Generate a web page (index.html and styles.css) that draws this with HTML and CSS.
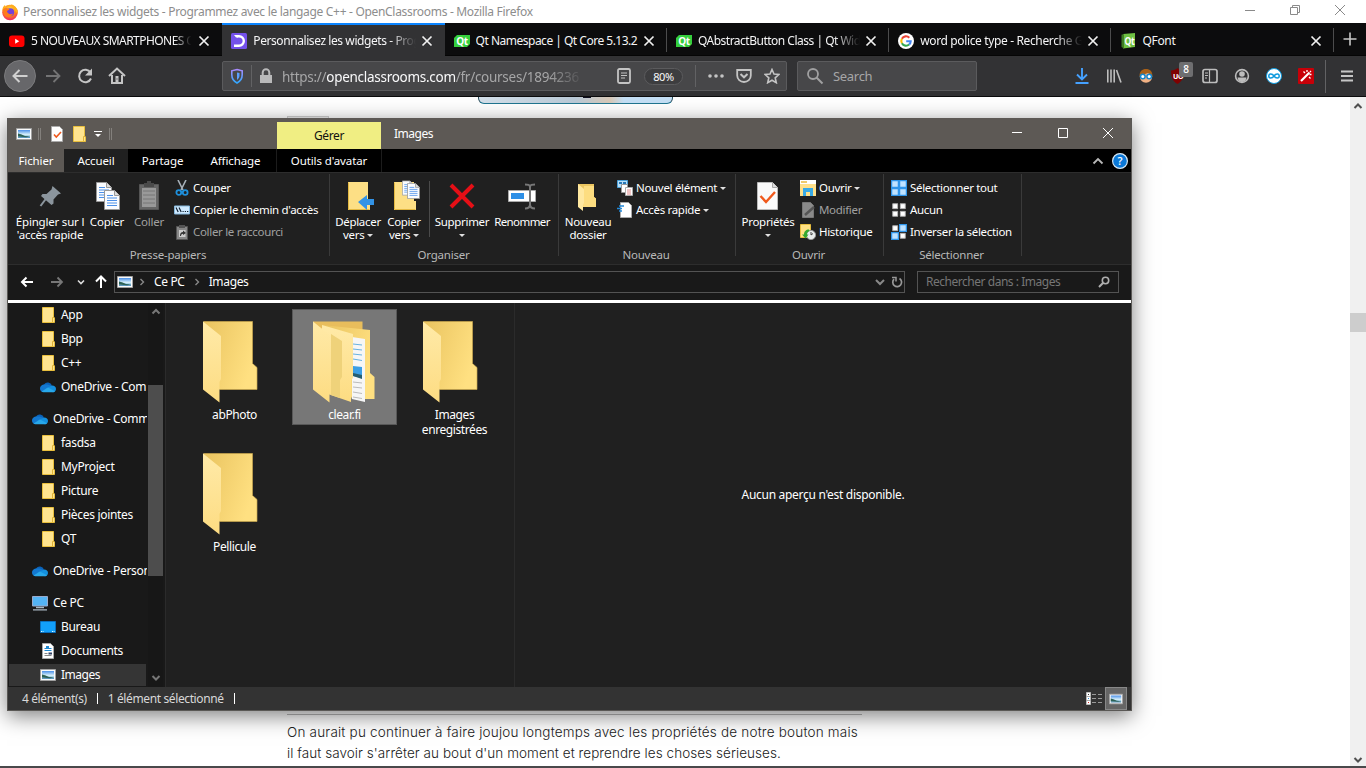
FILE: index.html
```html
<!DOCTYPE html>
<html lang="fr">
<head>
<meta charset="utf-8">
<title>Personnalisez les widgets</title>
<link rel="stylesheet" href="styles.css">
</head>
<body>
<svg class="defs" width="0" height="0">
  <defs>
    <linearGradient id="gFlap" x1="0" y1="0" x2="0" y2="1"><stop offset="0" stop-color="#ffeaa8"/><stop offset="1" stop-color="#fddc82"/></linearGradient>
    <linearGradient id="gBack" x1="0" y1="0" x2="1" y2="0.4"><stop offset="0" stop-color="#e9c35f"/><stop offset="1" stop-color="#ffe081"/></linearGradient>
    <linearGradient id="gSky" x1="0" y1="0" x2="0" y2="1"><stop offset="0" stop-color="#4a8fe8"/><stop offset=".55" stop-color="#d8f0fa"/><stop offset=".7" stop-color="#a8d4ea"/><stop offset="1" stop-color="#4a88b4"/></linearGradient>
    <linearGradient id="gShield" x1="0" y1="0" x2="0" y2="1"><stop offset="0" stop-color="#a98bff"/><stop offset="1" stop-color="#2fa8ff"/></linearGradient>
    <radialGradient id="gFox" cx=".5" cy=".3" r=".7"><stop offset="0" stop-color="#ffde3a"/><stop offset=".55" stop-color="#ff8a16"/><stop offset="1" stop-color="#f0246a"/></radialGradient>
    <symbol id="close" viewBox="0 0 16 16"><path d="M3.500 3.500l9 9m0-9l-9 9" stroke="currentColor" stroke-width="1.700" fill="none"/></symbol>
    <symbol id="qt" viewBox="0 0 16 16"><path d="M3 2h13v9l-3 3H0V5z" fill="#35cf3d"/><text x="8" y="11.500" text-anchor="middle" font-family="Open Sans" font-weight="700" font-size="10" fill="#fff">Qt</text></symbol>
    <symbol id="pic" viewBox="0 0 16 16"><path d="M.5 2.500h15v11H.5z" fill="#fafafa" stroke="#a0a0a0"/><path d="M2 4h12v8H2z" fill="url(#gSky)"/><path d="M2 7.500l3 .8 4 1.700 5 .5-4 .7-8-.7z" fill="#2d6256"/></symbol>
    <symbol id="fold" viewBox="0 0 16 16"><path d="M2.500.5h11v10l1 .5v4.500h-12z" fill="#ffe48f" stroke="#e9bf3d"/><path d="M12.500 15v-4.500h2" fill="none" stroke="#e0b437"/></symbol>
    <symbol id="cloud" viewBox="0 0 16 16"><path d="M4 5.500a4.500 4.500 0 0 1 8 1L7 10z" fill="#0a62b9"/><path d="M3.500 5.500C1.500 6 0 7.500 0 9.500c0 1.800 1 3 2.500 3.500L12 7 7.500 5.500z" fill="#1378d0"/><path d="M12 6.500c2.500 0 4 1.500 4 3.500s-1.300 3.200-3 3.200L5 10z" fill="#1490df"/><path d="M1.500 12.500L8 8.500l7 3.800c-.6.600-1.200.9-2 .9H3.500c-.8 0-1.500-.3-2-.7z" fill="#28a8ea"/></symbol>
    <symbol id="bigfold" viewBox="0 0 56 84"><path d="M1 1.500h49.500v42l4.500 4V69.500H12z" fill="url(#gBack)"/><path d="M2 1.500h48.500v42l4.500 4V69.500H18" fill="none" stroke="#c9a64e" stroke-width=".7"/><path d="M1 1.500l18 14.500v43l-1.500 3v20.500L1 69.500z" fill="url(#gFlap)"/></symbol>
    <symbol id="pagel" viewBox="0 0 16 20"><path d="M.5.5h10l5 5v14H.5z" fill="#fafcff" stroke="#999"/><path d="M10.500.5v5h5" fill="#ddd" stroke="#999"/><path d="M3 5.500h6M3 8h10M3 10.500h10M3 13h10M3 15.500h10" stroke="#4b90e8"/></symbol>
    <symbol id="cell" viewBox="0 0 7 7"><path d="M.75.75h5.500v5.500H.75z" fill="#fff" stroke="#aaa" stroke-width="1"/></symbol>
    <symbol id="cellb" viewBox="0 0 8 8"><path d="M.6.6h6.800v6.800H.6z" fill="#bfe2ff" stroke="#2f95ea" stroke-width="1.300"/></symbol>
  </defs>
</svg>

<div class="browser">
  <header class="titlebar">
    <svg class="i18" viewBox="0 0 18 18"><circle cx="9" cy="9.500" r="7.800" fill="url(#gFox)"/><path d="M1.500 8C1 5 2.500 3 4 2l.8 2.500zM10 1c4 1.500 7.500 5 6.500 10L13 6z" fill="#ffb01c"/><circle cx="9.200" cy="9.300" r="4" fill="#7541d9"/><path d="M2 6c3-2 5-1 6.500.5L6 8c0 3 4 4 6 2.500-1 4-7 5-9 1z" fill="#ff7a1c"/></svg>
    <span class="titletext">Personnalisez les widgets - Programmez avec le langage C++ - OpenClassrooms - Mozilla Firefox</span>
    <div class="wctl light">
      <svg viewBox="0 0 12 12"><path d="M1 6.500h10"/></svg>
      <svg viewBox="0 0 12 12"><path d="M1.500 3.500h7v7h-7zM3.500 3.500v-2h7v7h-2"/></svg>
      <svg viewBox="0 0 12 12"><path d="M1 1l10 10M11 1L1 11"/></svg>
    </div>
  </header>

  <nav class="tabs">
    <div class="tab nosep"><svg class="i16" viewBox="0 0 16 16"><rect y="2.500" width="15.500" height="11.500" rx="3" fill="#f00"/><path d="M6.200 5.700l4 2.500-4 2.600z" fill="#fff"/></svg><span class="tt a">5 NOUVEAUX SMARTPHONES Q</span><svg class="x"><use href="#close"/></svg></div>
    <div class="tab active nosep"><svg class="i16" viewBox="0 0 16 16"><rect width="16" height="16" rx="1.500" fill="#7451eb"/><path d="M6 3.200h2a4.800 4.800 0 0 1 0 9.600H3" fill="none" stroke="#fff" stroke-width="2.400"/><path d="M3 2h4v2.500H5z" fill="#fff"/></svg><span class="tt b">Personnalisez les widgets - Prog</span><svg class="x"><use href="#close"/></svg></div>
    <div class="tab"><svg class="i16"><use href="#qt"/></svg><span class="tt c">Qt Namespace | Qt Core 5.13.2</span><svg class="x"><use href="#close"/></svg></div>
    <div class="tab"><svg class="i16"><use href="#qt"/></svg><span class="tt d">QAbstractButton Class | Qt Wid</span><svg class="x"><use href="#close"/></svg></div>
    <div class="tab"><svg class="i16" viewBox="0 0 16 16"><circle cx="8" cy="8" r="8" fill="#fff"/><g fill="none" stroke-width="2.100"><path d="M11.300 4.700A4.700 4.700 0 0 0 3.900 5.700" stroke="#ea4335"/><path d="M3.900 5.700a4.700 4.700 0 0 0 0 4.600" stroke="#fbbc05"/><path d="M3.900 10.300a4.700 4.700 0 0 0 7.200 1.200" stroke="#34a853"/><path d="M11.100 11.500A4.500 4.500 0 0 0 12.700 8.200H8.200" stroke="#4285f4"/></g></svg><span class="tt e">word police type - Recherche G</span><svg class="x"><use href="#close"/></svg></div>
    <div class="tab"><svg class="i16" viewBox="0 0 16 16"><path d="M3 1l12-1v14L3 15.500z" fill="#6fc043"/><path d="M1.500 1.800L4 1v14.500L1.500 14z" fill="#3f7d25"/><text x="9.500" y="11.500" text-anchor="middle" font-family="Open Sans" font-weight="700" font-size="10" textLength="10" lengthAdjust="spacingAndGlyphs" fill="#fff">Qt</text></svg><span class="tt f">QFont</span><svg class="x"><use href="#close"/></svg></div>
    <svg class="plus" viewBox="0 0 16 16"><path d="M8 1.500v13M1.500 8h13" stroke="#c8c8c8" stroke-width="1.600"/></svg>
  </nav>

  <div class="toolbar">
    <span class="back"><svg class="i18" viewBox="0 0 18 18"><path d="M16.500 9H3m5.500-6L2.500 9l6 6" fill="none" stroke="#d0d0d0" stroke-width="2"/></svg></span>
    <svg class="i18 fwd" viewBox="0 0 18 18"><path d="M2 9h13M9.500 3l6 6-6 6" fill="none" stroke="#747475" stroke-width="1.800"/></svg>
    <svg class="i18 rel" viewBox="0 0 18 18"><path d="M14.500 5.500a6.200 6.200 0 1 0 .5 6" fill="none" stroke="#c5c5c5" stroke-width="2"/><path d="M16 1.500v7h-7z" fill="#c5c5c5"/></svg>
    <svg class="i18 home" viewBox="0 0 18 18"><path d="M1 9l8-7.500L17 9M4 8v8h10V8" fill="none" stroke="#c5c5c5" stroke-width="2"/><path d="M7.500 9h3v7h-3z" fill="#c5c5c5"/><path d="M8.500 11.500h1v1h-1z" fill="#333"/></svg>
    <div class="url">
      <svg class="i16 shield" viewBox="0 0 16 16"><path d="M8 1.500l5.200 1.300v4C13.200 11 11 13.500 8 15c-3-1.500-5.200-4-5.200-8.200v-4z" fill="none" stroke="url(#gShield)" stroke-width="1.600"/><path d="M8 4.500l2.500.6v2.500c0 2-1 3.300-2.500 4.300z" fill="#5aa0ff"/></svg>
      <i class="vs"></i>
      <svg class="i16 lock" viewBox="0 0 16 16"><path d="M2 7h12v8H2z" fill="#b9b9ba"/><path d="M4.700 7V4.500a3.300 3.300 0 0 1 6.600 0V7" fill="none" stroke="#b9b9ba" stroke-width="2"/></svg>
      <span class="addr">https://<b>openclassrooms.com</b>/fr/courses/1894236</span>
      <svg class="i16 reader" viewBox="0 0 16 16"><rect x="2" y="1" width="12" height="14" rx="1.500" fill="none" stroke="#c4c4c4" stroke-width="1.800"/><path d="M5 5h6M5 7.500h6M5 10h4" stroke="#c4c4c4"/></svg>
      <span class="zoom">80%</span>
      <i class="vs tall"></i>
      <svg class="i16 dots" viewBox="0 0 16 16"><g fill="#c4c4c4"><circle cx="2" cy="8" r="1.800"/><circle cx="8" cy="8" r="1.800"/><circle cx="14" cy="8" r="1.800"/></g></svg>
      <svg class="i16 pocket" viewBox="0 0 16 16"><path d="M1.200 2h13.600v5.500a6.800 6.500 0 0 1-13.600 0z" fill="none" stroke="#c4c4c4" stroke-width="1.800"/><path d="M4.500 6L8 9.300 11.500 6" fill="none" stroke="#c4c4c4" stroke-width="2"/></svg>
      <svg class="i16 star" viewBox="0 0 16 16"><path d="M8 1.500l2 4.500 4.900.5-3.700 3.300 1.100 4.900L8 12.200l-4.300 2.500 1.100-4.900L1.100 6.500 6 6z" fill="none" stroke="#c4c4c4" stroke-width="1.600"/></svg>
    </div>
    <div class="search"><svg class="i18" viewBox="0 0 18 18"><circle cx="7" cy="7" r="5" fill="none" stroke="#a0a0a1" stroke-width="1.800"/><path d="M10.500 10.500l6 6" stroke="#a0a0a1" stroke-width="2"/></svg><span>Search</span></div>
    <div class="exts">
      <svg class="i16" viewBox="0 0 16 16"><path d="M8 0v11M3 6.500l5 5 5-5M1.500 15h13" fill="none" stroke="#45a1ff" stroke-width="1.900"/></svg>
      <svg class="i16" viewBox="0 0 16 16"><path d="M1.800 1.500v13M5 1.500v13M8.200 1.500v13M10.500 2l4.500 12.500" fill="none" stroke="#bdbdbd" stroke-width="1.600"/></svg>
      <svg class="i16" viewBox="0 0 16 16"><circle cx="8" cy="8.500" r="6.200" fill="#f2b184"/><path d="M1.500 8C1.500 3.500 4 1 8 1s6.500 2.500 6.500 7L10 5z" fill="#a86018"/><circle cx="4.800" cy="8.500" r="2.300" fill="#fff" stroke="#1688cf" stroke-width="1.500"/><circle cx="11.200" cy="8.500" r="2.300" fill="#fff" stroke="#1688cf" stroke-width="1.500"/></svg>
      <span class="ub"><svg class="i16" viewBox="0 0 16 16"><path d="M1 2.500c3 0 5-1 6.500-2.500C9 1.500 12 2.500 14 2.500c0 7-2 11-6.500 13.500C3 13.500 1 9.500 1 2.500z" fill="#800000"/><text x="3" y="10.500" font-family="Open Sans" font-weight="700" font-size="7" fill="#fff">UO</text></svg><em>8</em></span>
      <svg class="i16" viewBox="0 0 16 16"><rect x="1" y="1.500" width="14" height="13" rx="2" fill="none" stroke="#bdbdbd" stroke-width="1.700"/><path d="M7.500 2v12M3 5h3M3 7.500h3M3 10h2" stroke="#bdbdbd" stroke-width="1.200"/></svg>
      <svg class="i16" viewBox="0 0 16 16"><circle cx="8" cy="8" r="6.400" fill="none" stroke="#bdbdbd" stroke-width="1.600"/><circle cx="8" cy="6" r="2.800" fill="#bdbdbd"/><path d="M3.500 9.500h9c-.5 3-2 4.500-4.500 4.500s-4-1.500-4.500-4.500z" fill="#bdbdbd"/></svg>
      <svg class="i16" viewBox="0 0 16 16"><circle cx="8" cy="8" r="7.500" fill="#fff" stroke="#0d9ade"/><path d="M8 8C6 5 2.800 5.500 2.800 8S6 11 8 8s5.200-2.500 5.200 0S10 11 8 8z" fill="none" stroke="#0d9ade" stroke-width="1.500"/></svg>
      <svg class="i16" viewBox="0 0 16 16"><rect width="16" height="16" rx="1" fill="#c80008"/><path d="M3 13l8.500-8.500" stroke="#fff" stroke-width="2.200"/><path d="M9 2v2M13.500 6.500h-2M5.500 3.500l1.500 1.500M12.500 10.500L11 9M13 3l-1 1" stroke="#fff" stroke-width="1.300"/></svg>
    </div>
    <i class="vs end"></i>
    <svg class="i16 menu" viewBox="0 0 16 16"><path d="M2 3.500h12M2 8h12M2 12.500h12" stroke="#c5c5c5" stroke-width="1.800"/></svg>
  </div>

  <main class="page">
    <article class="article">
      <div class="shot"><i></i></div>
      <div class="chip"></div>
      <hr>
      <p>On aurait pu continuer à faire joujou longtemps avec les propriétés de notre bouton mais</p>
      <p class="l2">il faut savoir s'arrêter au bout d'un moment et reprendre les choses sérieuses.</p>
    </article>
    <aside class="sb">
      <svg viewBox="0 0 16 16"><path d="M4.500 11L8 7.500l3.500 3.500" fill="none" stroke="#505050" stroke-width="2"/></svg>
      <i></i>
      <svg class="dn" viewBox="0 0 16 16"><path d="M4.500 7L8 10.500 11.500 7" fill="none" stroke="#505050" stroke-width="2"/></svg>
    </aside>
  </main>
</div>

<section class="win">
  <div class="wt">
    <svg class="i16 q1"><use href="#pic"/></svg><i class="grip"></i>
    <svg class="i16 q2" viewBox="0 0 16 16"><path d="M2.500.5h8l3 3v12h-11z" fill="#fff" stroke="#aaa"/><path d="M5 8.500l2.300 2.500L12 6" fill="none" stroke="#f05a1e" stroke-width="1.600"/></svg>
    <svg class="i16 q3"><use href="#fold"/></svg>
    <svg class="q4" viewBox="0 0 8 8"><path d="M0 1.500h8" stroke="#fff"/><path d="M1 4h6L4 7z" fill="#fff"/></svg><i class="grip g2"></i>
    <span class="ctx">Gérer</span>
    <span class="wname">Images</span>
    <div class="wctl dark">
      <svg viewBox="0 0 12 12"><path d="M1 5.500h10"/></svg>
      <svg viewBox="0 0 12 12"><path d="M1.500 1.500h9v9h-9z"/></svg>
      <svg viewBox="0 0 12 12"><path d="M1 1l10 10M11 1L1 11"/></svg>
    </div>
  </div>
  <div class="wtabs">
    <span class="file">Fichier</span><span class="cur">Accueil</span><span class="t3">Partage</span><span class="t4">Affichage</span><span class="t5">Outils d'avatar</span>
    <svg class="coll" viewBox="0 0 12 12"><path d="M1.500 8.500L6 4l4.500 4.500" fill="none" stroke="#b8b8b8" stroke-width="1.800"/></svg>
    <svg class="i16 help" viewBox="0 0 16 16"><circle cx="8" cy="8" r="7.400" fill="#0b78d7" stroke="#d8e8f4" stroke-width="1.200"/><text x="8" y="12" text-anchor="middle" font-family="Open Sans" font-size="11" font-weight="600" fill="#fff">?</text></svg>
  </div>

  <div class="ribbon">
    <div class="grp g-clip"><div class="tools">
      <button class="big w72"><svg class="pin" viewBox="0 0 32 32"><path d="M20.500 6L29 13.500l-3 1-4.500 5 0 4-2 1.500L9 16l1.500-2 4 0 5-4.500z" fill="#8b959d"/><path d="M14.500 18L8.500 26" stroke="#8b959d" stroke-width="2"/></svg><span>Épingler sur l<br>'accès rapide</span></button>
      <button class="big w42"><svg viewBox="0 0 32 32"><use href="#pagel" x="5" y="2" width="16" height="20"/><use href="#pagel" x="13" y="10" width="16" height="20"/></svg><span>Copier</span></button>
      <button class="big w42 off"><svg viewBox="0 0 32 32"><path d="M6.500 4.500h19v25h-19z" fill="#666" stroke="#555"/><path d="M9 8h14v19H9z" fill="#999"/><path d="M10 11h12M10 15h12M10 19h12M10 23h12" stroke="#777"/><path d="M11 3h10v4H11zM14 1h4v3h-4z" fill="#4a4a4a"/></svg><span>Coller</span></button>
      <ul class="small">
        <li><svg viewBox="0 0 16 16"><path d="M4 0l5 10M12 0L7 10" stroke="#a6b0b8" stroke-width="1.600"/><circle cx="4.800" cy="12.500" r="2.400" fill="none" stroke="#1e90dc" stroke-width="1.800"/><circle cx="11.200" cy="12.500" r="2.400" fill="none" stroke="#1e90dc" stroke-width="1.800"/></svg><span>Couper</span></li>
        <li><svg viewBox="0 0 16 16"><path d="M.5 4h15v8H.5z" fill="#cfeaff" stroke="#86b8dc"/><path d="M2 5.500L4.200 10M5 5.500L7.200 10M8.500 9.500h1.200M10.800 9.500H12M13 9.500h1.300" stroke="#123" stroke-width="1.200"/></svg><span>Copier le chemin d'accès</span></li>
        <li class="off"><svg viewBox="0 0 16 16"><path d="M2.500 2.500h11v13h-11z" fill="#888" stroke="#555"/><path d="M5 1h6v3H5z" fill="#555"/><path d="M5 6h6.500v7H5z" fill="#ccc"/><path d="M6 12c0-3 1-4 3-4V6.500L12 9 9 11V9.800c-1.200 0-1.800.8-2 2.200z" fill="#333"/></svg><span>Coller le raccourci</span></li>
      </ul></div><h6>Presse-papiers</h6></div>
    <div class="grp g-org"><div class="tools">
      <button class="big w46"><svg viewBox="0 0 32 32"><path d="M5 2h20v19h2v9H5z" fill="#fddf85"/><path d="M5.500 2.500v27h21" fill="none" stroke="#e4b942"/><path d="M31 19v6h-7v5l-9-8 9-7v4z" fill="#3293e6"/></svg><span>Déplacer<br>vers <i class="car"></i></span></button>
      <button class="big w46"><svg viewBox="0 0 32 32"><path d="M5 2h20v19h2v9H5z" fill="#fddf85"/><path d="M5.500 2.500v27h21" fill="none" stroke="#e4b942"/><use href="#pagel" x="13" y="0" width="12" height="16"/><use href="#pagel" x="18" y="3" width="13" height="16"/></svg><span>Copier<br>vers <i class="car"></i></span></button>
      <i class="tsep"></i>
      <button class="big w60"><svg viewBox="0 0 32 32"><path d="M5 5l22 22M27 5L5 27" stroke="#e60f16" stroke-width="4"/></svg><span>Supprimer<br><i class="car"></i></span></button>
      <button class="big w60 ren"><svg viewBox="0 0 32 32"><path d="M2.500 10.500h27v11h-27z" fill="#fff" stroke="#aaa"/><path d="M5 13h13v6H5z" fill="#2d8fe6"/><path d="M19 4.500c3 0 5 0 5 3v17c0 3-2 4-5 4M29 4.500c-3 0-5 0-5 3v17c0 3 2 4 5 4" fill="none" stroke="#777" stroke-width="2"/></svg><span>Renommer</span></button>
      </div><h6>Organiser</h6></div>
    <div class="grp g-new"><div class="tools">
      <button class="big w54"><svg viewBox="0 0 32 32"><path d="M7 4h16v13l2 1.500V27H7z" fill="#ecc661"/><path d="M13 6h10v11l2 1.500V27H12z" fill="#fddd80"/><path d="M7 4l6 5v14l-1 2v6l-5-4z" fill="#ffe8a0"/></svg><span>Nouveau<br>dossier</span></button>
      <ul class="small">
        <li><svg viewBox="0 0 16 16"><path d="M.5.5h10v7H.5z" fill="#b9e0f8" stroke="#4aa0d8"/><path d="M2 2h3v2H2zM6 2h3v2H6z" fill="#2878b8"/><path d="M4.500 4.500h6v8h-6z" fill="#fff" stroke="#999"/><path d="M8.500 7.500h7v8h-7z" fill="#fff" stroke="#aaa"/><path d="M10 10h4M10 12h4M10 14h4" stroke="#e28a8a"/></svg><span>Nouvel élément <i class="car"></i></span></li>
        <li><svg viewBox="0 0 16 16"><path d="M3.500.5h8l3 3v12h-11z" fill="#fff" stroke="#aaa"/><path d="M2 4h5M0 6.500h5M2 9h3" stroke="#2188d8" stroke-width="1.300"/></svg><span>Accès rapide <i class="car"></i></span></li>
      </ul></div><h6>Nouveau</h6></div>
    <div class="grp g-open"><div class="tools">
      <button class="big w60"><svg viewBox="0 0 32 32"><path d="M5.500 2.500h15l5 5v22h-20z" fill="#fafafa" stroke="#bbb"/><path d="M20.500 2.500v5h5" fill="#ddd" stroke="#aaa"/><path d="M8.500 16l5.500 6 9-10" fill="none" stroke="#f0591c" stroke-width="2.400"/></svg><span>Propriétés<br><i class="car"></i></span></button>
      <ul class="small">
        <li><svg viewBox="0 0 16 16"><path d="M0 0h16v16H0z" fill="#ffe08a"/><path d="M0 0h16v4H0z" fill="#fff"/><path d="M1 2h6" stroke="#e8b83a" stroke-width="1.500"/><path d="M3 16V8h10v8h-3v-4H6v4z" fill="#39a9e4"/></svg><span>Ouvrir <i class="car"></i></span></li>
        <li class="off"><svg viewBox="0 0 16 16"><path d="M2.500.5h8l3 3v12h-11z" fill="#8a8a8a" stroke="#777"/><path d="M5 13l9-8" stroke="#555" stroke-width="2.500"/></svg><span>Modifier</span></li>
        <li><svg viewBox="0 0 16 16"><path d="M.5.5h10v13H.5z" fill="#ffe184" stroke="#e6bd3f"/><circle cx="11" cy="11" r="4.600" fill="#e8ecec" stroke="#999"/><path d="M11 8v3l2-1.500" fill="none" stroke="#444"/><path d="M9 5.500c-3 0-5 2-5 5H2l3.500 4 3-4H7c0-2 1-3 2.500-3.500z" fill="#35a82e"/></svg><span>Historique</span></li>
      </ul></div><h6>Ouvrir</h6></div>
    <div class="grp g-sel"><div class="tools">
      <ul class="small">
        <li><svg viewBox="0 0 16 16"><use href="#cellb" width="8" height="8"/><use href="#cellb" x="8" width="8" height="8"/><use href="#cellb" y="8" width="8" height="8"/><use href="#cellb" x="8" y="8" width="8" height="8"/></svg><span>Sélectionner tout</span></li>
        <li><svg viewBox="0 0 16 16"><use href="#cell" x="1" y="1" width="6.500" height="6.500"/><use href="#cell" x="8.500" y="1" width="6.500" height="6.500"/><use href="#cell" x="1" y="8.500" width="6.500" height="6.500"/><use href="#cell" x="8.500" y="8.500" width="6.500" height="6.500"/></svg><span>Aucun</span></li>
        <li><svg viewBox="0 0 16 16"><use href="#cell" x="1" y="1" width="6.500" height="6.500"/><use href="#cellb" x="8" width="8" height="8"/><use href="#cellb" y="8" width="8" height="8"/><use href="#cell" x="8.500" y="8.500" width="6.500" height="6.500"/></svg><span>Inverser la sélection</span></li>
      </ul></div><h6>Sélectionner</h6></div>
  </div>

  <div class="navbar">
    <svg class="n1" viewBox="0 0 14 14"><path d="M13 7H2M6.500 2.500L2 7l4.500 4.500" fill="none" stroke="#fff" stroke-width="2"/></svg>
    <svg class="n2" viewBox="0 0 14 14"><path d="M1 7h11M7.500 2.500L12 7l-4.500 4.500" fill="none" stroke="#777" stroke-width="1.800"/></svg>
    <svg class="n3" viewBox="0 0 8 8"><path d="M1 2.500l3 3 3-3" fill="none" stroke="#ddd" stroke-width="1.600"/></svg>
    <svg class="n4" viewBox="0 0 14 14"><path d="M7 13V2M2 6.500L7 1.500l5 5" fill="none" stroke="#fff" stroke-width="2"/></svg>
    <div class="path"><svg class="i16"><use href="#pic"/></svg><svg class="ch" viewBox="0 0 8 8"><path d="M2.500 1l3 3-3 3" fill="none" stroke="#888" stroke-width="1.400"/></svg><span class="cepc">Ce PC</span><svg class="ch" viewBox="0 0 8 8"><path d="M2.500 1l3 3-3 3" fill="none" stroke="#888" stroke-width="1.400"/></svg><span>Images</span>
      <svg class="drop" viewBox="0 0 10 10"><path d="M1 3l4 4 4-4" fill="none" stroke="#888" stroke-width="2"/></svg><svg class="refr" viewBox="0 0 12 12"><path d="M8.500 2.500A4.400 4.400 0 1 1 3 3.200" fill="none" stroke="#999" stroke-width="1.700"/><path d="M1 1.500h4V5.500" fill="none" stroke="#999" stroke-width="1.500"/></svg></div>
    <div class="find"><span>Rechercher dans : Images</span><svg viewBox="0 0 12 12"><circle cx="7.500" cy="4.500" r="3.200" fill="none" stroke="#b0b0b0" stroke-width="1.600"/><path d="M5.200 6.800L1 11" stroke="#b0b0b0" stroke-width="2"/></svg></div>
  </div>

  <div class="wbody">
    <div class="tree">
      <ul>
        <li class="c"><svg><use href="#fold"/></svg><span>App</span></li>
        <li class="c"><svg><use href="#fold"/></svg><span>Bpp</span></li>
        <li class="c"><svg><use href="#fold"/></svg><span>C++</span></li>
        <li class="c"><svg><use href="#cloud"/></svg><span>OneDrive - Com</span></li>
        <li class="sp"><svg><use href="#cloud"/></svg><span>OneDrive - Comm</span></li>
        <li class="c"><svg><use href="#fold"/></svg><span>fasdsa</span></li>
        <li class="c"><svg><use href="#fold"/></svg><span>MyProject</span></li>
        <li class="c"><svg><use href="#fold"/></svg><span>Picture</span></li>
        <li class="c"><svg><use href="#fold"/></svg><span>Pièces jointes</span></li>
        <li class="c"><svg><use href="#fold"/></svg><span>QT</span></li>
        <li class="sp"><svg><use href="#cloud"/></svg><span>OneDrive - Person</span></li>
        <li class="sp"><svg viewBox="0 0 16 16"><path d="M.5 1.500h15v9.500H.5z" fill="#54b4f5" stroke="#9ac"/><path d="M4 12.500h8M1 14.800h14" stroke="#aab8c4" stroke-width="1.300"/></svg><span>Ce PC</span></li>
        <li class="c"><svg viewBox="0 0 16 16"><path d="M.5 2.500h15v11H.5z" fill="#12a0fb" stroke="#0a70c0"/><path d="M1 12.500h2.500M12 12.500h2.500" stroke="#dff" stroke-dasharray="1.200 .6"/></svg><span>Bureau</span></li>
        <li class="c"><svg viewBox="0 0 16 16"><path d="M2.500.5h8l3 3v12h-11z" fill="#fff" stroke="#aaa"/><path d="M4.500 5.500h7M4.500 7.500h7" stroke="#2088d0"/><path d="M6 3h3v2H6z" fill="#2088d0"/><path d="M4.500 10.500h3M4.500 12.500h7" stroke="#888"/><path d="M8.500 9.500h3.500v2H8.500z" fill="#346"/></svg><span>Documents</span></li>
        <li class="c sel"><svg><use href="#pic"/></svg><span>Images</span></li>
      </ul>
      <div class="tsb"><svg viewBox="0 0 10 10"><path d="M1.500 6.500L5 3l3.500 3.500" fill="none" stroke="#777" stroke-width="2"/></svg><i></i><svg class="dn" viewBox="0 0 10 10"><path d="M1.500 3L5 6.500 8.500 3" fill="none" stroke="#777" stroke-width="2"/></svg></div>
    </div>
    <div class="files">
      <figure><svg><use href="#bigfold"/></svg><figcaption>abPhoto</figcaption></figure>
      <figure class="sel"><svg class="full" viewBox="0 0 64 84"><path d="M1 1.500h49.500V20H9z" fill="#e8bd5c"/><path d="M10 5l48 5v43l4.500 4v22H40z" fill="url(#gBack)"/><path d="M40 17l13 2v63l-13-3z" fill="#f6f6f6"/><path d="M41 24l9 1M41 29l9 1M41 34l9 1M41 39l9 1.500" stroke="#68b2e0"/><path d="M41 46l9 1v11l-9-2z" fill="#3c9ee4"/><path d="M41 53l9 2v4l-9-3z" fill="#265e70"/><path d="M41 62l9 1M41 67l9 1M41 72l9 1.500M41 77l9 1.500" stroke="#bbb"/><path d="M10 5l31 9v44l-2 2v22L10 72z" fill="url(#gFlap)"/><path d="M19 14l11 7v36l-2 3v18l-9-3z" fill="#efd27a"/><path d="M1 1.500l18 14.500v43l-1.500 3v20.500L1 69.500z" fill="url(#gFlap)"/></svg><figcaption>clear.fi</figcaption></figure>
      <figure><svg><use href="#bigfold"/></svg><figcaption>Images<br>enregistrées</figcaption></figure>
      <figure><svg><use href="#bigfold"/></svg><figcaption>Pellicule</figcaption></figure>
    </div>
    <div class="preview">Aucun aperçu n'est disponible.</div>
  </div>

  <footer class="status"><span class="s1">4 élément(s)</span><i></i><span class="s2">1 élément sélectionné</span><i></i>
    <svg class="det" viewBox="0 0 16 14"><path d="M.5.5h4v12h-4z" fill="#fff" stroke="#bbb"/><path d="M0 4.500h5M0 8.500h5" stroke="#aaa"/><path d="M2 2h1v1H2z" fill="#333"/><path d="M2 6h1v1H2z" fill="#2a8ad0"/><path d="M2 10h1v1H2z" fill="#d02a2a"/><path d="M6 2.500h4M12 2.500h4M6 6.500h4M12 6.500h4M6 10.500h4M12 10.500h4" stroke="#999"/></svg>
    <span class="thumb"><svg width="14" height="14"><use href="#pic"/></svg></span>
  </footer>
</section>
</body>
</html>
```
FILE: styles.css
```css
* { box-sizing: border-box; }
body { margin: 0; width: 1366px; height: 768px; overflow: hidden; background: #fff; font: 12px/15px "Noto Sans", "Open Sans", sans-serif; letter-spacing: -0.34px; white-space: nowrap; }
svg { flex: none; display: block; }
i { display: block; flex: none; }
ul, h6, p, figure { margin: 0; padding: 0; list-style: none; }
.defs { position: absolute; }
.i16 { width: 16px; height: 16px; }
.i18 { width: 18px; height: 18px; }

.browser { display: flex; flex-direction: column; height: 768px; border-bottom: 2px solid #4a494b; }
.titlebar { display: flex; align-items: center; height: 23px; padding-left: 1px; color: #8d8d8d; }
.titletext { margin-left: 4px; letter-spacing: -0.31px; }
.wctl { display: flex; margin-left: auto; fill: none; }
.wctl svg { width: 12px; height: 12px; }
.wctl.light { gap: 33px; margin-right: 20px; padding-bottom: 3px; stroke: #8a8a8a; }
.wctl.dark { gap: 33.500px; margin-right: 17px; padding-bottom: 1px; stroke: #fff; }

.tabs { display: flex; height: 33px; background: #0c0c0d; color: #f5f5f6; border-bottom: 1px solid #050505; }
.tab { display: flex; align-items: center; width: 222.3px; padding: 3px 10px 0 9px; position: relative; }
.tab::after { content: ""; position: absolute; right: 0; top: 5px; width: 1px; height: 24px; background: #4c4c4d; }
.tab.nosep::after { display: none; }
.tab.active { background: #323234; border-top: 2px solid #0a84ff; padding-top: 0; height: 33px; }
.tt { margin-left: 6px; width: 163px; overflow: hidden; -webkit-mask-image: linear-gradient(90deg, #000 84%, transparent); }
.tt.c, .tt.f { -webkit-mask-image: none; }
.tt.a { letter-spacing: -0.55px; -webkit-mask-image: linear-gradient(90deg, #000 88%, transparent 99%); }
.tt.b, .tt.e { letter-spacing: -0.42px; }
.tt.e { letter-spacing: -0.36px; }
.tt.c, .tt.d { letter-spacing: -0.5px; }
.x { width: 16px; height: 16px; margin-left: 3px; color: #f0f0f0; }
.plus { width: 16px; height: 16px; margin: 8px 0 0 8px; }

.toolbar { display: flex; align-items: center; height: 41px; background: #323234; border-bottom: 1px solid #0c0c0d; }
.back { display: flex; align-items: center; justify-content: center; width: 32px; height: 32px; margin-left: 4px; border-radius: 50%; background: #67676a; border: 1px solid #7b7b7d; }
.fwd { margin-left: 8px; }
.rel { margin-left: 14px; }
.home { margin-left: 14px; }
.url, .search { display: flex; align-items: center; height: 30px; background: #474749; border: 1px solid #5b5b5d; border-radius: 2px; color: #a6a6a7; font-size: 13.500px; }
.url { width: 565px; margin-left: 96px; }
.shield { margin-left: 6px; }
.vs { width: 1px; height: 22px; margin-left: 6px; background: #626264; }
.lock { margin-left: 6px; }
.addr { width: 302px; margin-left: 8px; padding-top: 1px; overflow: hidden; line-height: 20px; letter-spacing: -0.28px; -webkit-mask-image: linear-gradient(90deg, #000 88%, transparent); }
.addr b { font-weight: 400; color: #f9f9fa; }
.reader { margin-left: 32px; }
.zoom { margin-left: 12px; width: 39px; height: 17px; border: 1px solid #5b5b5d; border-radius: 9px; background: #3d3d3f; color: #f9f9fa; font-size: 11px; text-align: center; line-height: 15px; }
.tall { margin-left: 12px; }
.dots { margin-left: 12px; }
.pocket, .star { margin-left: 12px; }
.search { width: 180px; margin-left: 10px; }
.search svg { margin-left: 8px; }
.search span { margin-left: 9px; padding-top: 1px; letter-spacing: -0.3px; font-size: 13px; }
.exts { display: flex; gap: 16px; margin-left: 97px; }
.ub { position: relative; }
.ub em { position: absolute; left: 9px; top: -6px; width: 14px; height: 15px; border-radius: 2px; background: #6e6e70; color: #fff; font: 600 10px/15px "Open Sans", sans-serif; text-align: center; }
.end { height: 33px; margin-left: 11px; }
.menu { margin-left: 13px; }

.page { display: flex; flex: 1; min-height: 0; }
.article { width: 575px; margin-left: 287px; color: #212121; font: 300 13.500px/21px Inter, sans-serif; letter-spacing: 0.2px; }
.l2 { letter-spacing: 0.06px; }
.shot { width: 195px; height: 7px; margin-left: 191px; border: 1px solid #294d5c; border-top: 0; border-radius: 0 0 6px 6px; background: linear-gradient(90deg, #d4e0ea, #b9c9d6 50%, #d8c9b8 68%, #c4dff5 75%, #c4dff5); border-bottom-color: #1f7590; }
.shot i { width: 8px; height: 1px; margin-left: 104px; background: #112; }
.chip { width: 42px; height: 20px; margin-top: 12px; border: 1px solid #d0d0d0; background: #eee; }
hr { height: 1px; margin: 578px 0 7px; border: 0; background: #b9b9b9; }
.sb { display: flex; flex-direction: column; width: 16px; margin-left: auto; background: #f0f0f0; }
.sb i { height: 19px; margin-top: 200px; background: #cdcdcd; }
.sb .dn { margin-top: auto; margin-bottom: -1px; }
.sb svg { width: 16px; height: 16px; }

.win { position: absolute; left: 7px; top: 118px; width: 1125px; height: 593px; display: flex; flex-direction: column; border: 1px solid #5a5855; border-top: 0; background: #202020; color: #fff; box-shadow: 0 5px 20px rgba(0,0,0,.5); }
.wt { display: flex; align-items: center; height: 31px; flex: none; background: #5d5955; }
.q1 { margin-left: 8px; }
.grip { width: 3px; height: 12px; margin-left: 6px; border: 1px solid #83807c; border-width: 0 1px; }
.q2 { margin-left: 8px; }
.q3 { margin-left: 6px; }
.q4 { width: 8px; height: 8px; margin-left: 7px; }
.g2 { margin-left: 7px; }
.ctx { align-self: flex-end; width: 104px; height: 27px; margin-left: 165px; background: #f0ee83; color: #111; text-align: center; line-height: 28px; letter-spacing: -0.4px; }
.wname { margin-left: 13px; padding-bottom: 1px; letter-spacing: -0.5px; }
.wtabs { display: flex; align-items: center; height: 23px; flex: none; background: #000; font-size: 11.500px; letter-spacing: -0.1px; }
.wtabs span { line-height: 24px; height: 23px; text-align: center; }
.file { width: 56px; background: #5d5955; }
.wtabs .cur { width: 64px; background: #202020; }
.t3 { width: 69px; }
.t4 { width: 77px; }
.t5 { width: 106px; margin-left: 2px; border: 1px solid #1c1c1c; border-width: 0 1px; }
.coll { width: 12px; height: 12px; margin-left: auto; }
.help { margin: 0 3px 0 8px; }

.ribbon { display: flex; height: 93px; flex: none; background: #202020; border: 1px solid #2d2d2d; border-width: 1px 0; font-size: 11.500px; letter-spacing: -0.31px; }
.grp { display: flex; flex-direction: column; border-right: 1px solid #3a3a3a; height: 82px; margin-top: 1px; padding-top: 3px; }
.tools { display: flex; height: 71px; flex: none; }
.grp h6 { font: inherit; color: #b8b8b8; text-align: center; line-height: 15px; height: 15px; margin-top: -1px; letter-spacing: -0.22px; }
.g-clip { width: 322px; padding-left: 6px; }
.g-clip h6 { margin-left: -7px; }
.g-org { width: 229px; padding-left: 5px; }
.g-org h6 { margin-left: -6px; }
.g-new { width: 177px; padding-left: 2px; }
.g-new h6 { margin-left: -4px; }
.g-open { width: 148px; padding-left: 2px; }
.g-open h6 { margin-left: -4px; }
.g-sel { width: 138px; padding-left: 5px; }
.g-sel h6 { margin-left: -7px; }
.big { display: flex; flex-direction: column; align-items: center; padding: 3px 0 0; border: 0; background: none; color: inherit; font: inherit; line-height: 13px; letter-spacing: inherit; }
.big svg { width: 32px; height: 32px; }
.big .pin { margin-left: -4px; }
.big > span { margin-top: 3px; }
.g-clip .big { letter-spacing: -0.2px; }
.w42 { width: 42px; }
.w46 { width: 46px; }
.w46 svg { margin-left: 2px; }
.w54 { width: 54px; }
.w54 svg { margin-left: -3px; }
.w60 { width: 60px; }
.w60.ren { letter-spacing: -0.6px; }
.off { color: #a0a0a0; }
.w72 { width: 72px; }
.small li { display: flex; align-items: center; height: 22px; }
.small li span { padding-bottom: 2px; }
.small svg { width: 16px; height: 16px; margin: 0 3px 0 2px; }
.small li > svg { margin-top: -1px; }
.g-clip .small svg { margin-left: 4px; }
.car { display: inline-block; border: 3px solid transparent; border-top-color: #e0e0e0; border-bottom: 0; vertical-align: 2px; margin-left: 0; }
.tsep { width: 1px; height: 56px; margin: 4px 2px 0 2px; background: #4a4a4a; }

.navbar { display: flex; align-items: center; height: 38px; flex: none; background: #191919; border-bottom: 3px solid #fff; padding: 0 0 1px 12px; }
.navbar svg { width: 14px; height: 14px; }
.navbar .n2 { margin-left: 16px; }
.navbar .n3 { width: 8px; height: 8px; margin-left: 13px; }
.navbar .n4 { margin-left: 9px; }
.path, .find { display: flex; align-items: center; height: 22px; border: 1px solid #535353; }
.path { width: 791px; margin-left: 6px; }
.path .i16 { width: 16px; height: 16px; margin-left: 2px; }
.path .ch { width: 8px; height: 8px; margin-left: 5px; }
.path span { margin-left: 8px; padding-bottom: 1px; }
.path .cepc + .ch { margin-left: 8px; }
.path .drop { width: 10px; height: 10px; margin-left: auto; }
.path .refr { width: 12px; height: 12px; margin: 0 1px 0 6px; }
.find { width: 202px; margin-left: 12px; color: #767676; padding: 0 8px 0 8px; justify-content: space-between; }
.find span { padding-bottom: 1px; letter-spacing: -0.5px; }
.find span { letter-spacing: -0.47px; font-size: 12px; }
.find svg { width: 12px; height: 12px; }

.wbody { display: flex; height: 384px; flex: none; }
.tree { display: flex; width: 158px; background: #191919; border-right: 1px solid #2b2b2b; }
.tree ul { width: 139px; overflow: hidden; }
.tree li { display: flex; align-items: center; height: 24px; padding-left: 24px; overflow: hidden; }
.tree li.c { padding-left: 32px; }
.tree li.sp { margin-top: 8px; }
.tree li svg { width: 16px; height: 16px; margin-right: 5px; }
.tree li span { padding-bottom: 1px; letter-spacing: -0.3px; }
.tree li.sel { height: 22px; margin: 1px 1px 0 1px; padding-left: 31px; background: #353535; }
.tree li.sel span { letter-spacing: -0.5px; }
.tsb { width: 15px; margin-left: 1px; display: flex; flex-direction: column; align-items: center; padding: 4px 0; background: #171717; }
.tsb svg { width: 10px; height: 10px; }
.tsb i { width: 15px; height: 191px; margin-top: 68px; background: #4d4d4d; }
.tsb .dn { margin-top: auto; }
.files { display: grid; grid-template-columns: repeat(3, 105px); grid-auto-rows: 116px; gap: 16px 5px; width: 349px; padding: 6px 0 0 16px; border-right: 1px solid #2b2b2b; align-content: start; }
figure { padding: 11px 0 0 20px; }
figure svg { width: 56px; height: 84px; }
figure svg.full { width: 64px; margin-left: -1px; }
figure.sel { background: #777; border: 1px solid #585858; padding-top: 10px; }
figcaption { margin: 3px 0 0 -20px; text-align: center; line-height: 15px; letter-spacing: -0.4px; }
.preview { flex: 1; display: flex; align-items: center; justify-content: center; padding-bottom: 1px; letter-spacing: -0.3px; }

.status { display: flex; align-items: center; flex: 1; background: #333; color: #d8d8d8; letter-spacing: -0.38px; }
.s1 { margin-left: 14px; }
.status i { width: 1px; height: 11px; margin: 0 10px; background: #fff; }
.det { width: 16px; height: 14px; margin-left: auto; }
.thumb { display: flex; align-items: center; justify-content: center; width: 22px; height: 23px; margin: 0 4px 0 3px; background: #666; border: 1px solid #888; }
```
